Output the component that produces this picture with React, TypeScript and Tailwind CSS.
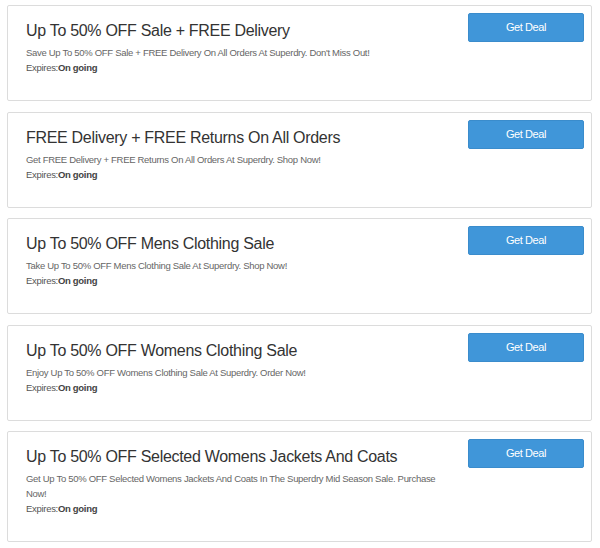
const deals = [
  {
    title: 'Up To 50% OFF Sale + FREE Delivery',
    desc: "Save Up To 50% OFF Sale + FREE Delivery On All Orders At Superdry. Don't Miss Out!",
  },
  {
    title: 'FREE Delivery + FREE Returns On All Orders',
    desc: 'Get FREE Delivery + FREE Returns On All Orders At Superdry. Shop Now!',
  },
  {
    title: 'Up To 50% OFF Mens Clothing Sale',
    desc: 'Take Up To 50% OFF Mens Clothing Sale At Superdry. Shop Now!',
  },
  {
    title: 'Up To 50% OFF Womens Clothing Sale',
    desc: 'Enjoy Up To 50% OFF Womens Clothing Sale At Superdry. Order Now!',
  },
  {
    title: 'Up To 50% OFF Selected Womens Jackets And Coats',
    desc: 'Get Up To 50% OFF Selected Womens Jackets And Coats In The Superdry Mid Season Sale. Purchase Now!',
  },
];

const DealCard = ({ title, desc }: { title: string; desc: string }) => (
  <div className="flex items-start justify-between bg-white border border-[#dcdcdc] rounded-[2px]">
    <div className="pt-[15px] pl-[18px] pb-[25px] w-[440px]">
      <h3 className="text-[16px] leading-[20px] tracking-[-0.3px] text-[#333] font-normal">{title}</h3>
      <p className="mt-[4px] text-[9.5px] leading-[15px] tracking-[-0.3px] text-[#666] w-[415px]">{desc}</p>
      <div className="text-[9.5px] leading-[15px] tracking-[-0.3px] text-[#555]">
        Expires:<span className="font-bold text-[#444]">On going</span>
      </div>
    </div>
    <button className="mt-[7px] mr-[7px] w-[116px] h-[29px] bg-[#4096d9] border border-[#3a8ccc] rounded-[2px] text-white text-[11px] tracking-[-0.4px]">
      Get Deal
    </button>
  </div>
);

export default function App() {
  return (
    <div
      className="w-[600px] min-h-[548px] bg-white pt-[5px] pl-[7px]"
      style={{ fontFamily: '"Liberation Sans", Arial, sans-serif' }}
    >
      <div className="w-[585px] flex flex-col gap-[10.5px]">
        {deals.map((d) => (
          <DealCard key={d.title} title={d.title} desc={d.desc} />
        ))}
      </div>
    </div>
  );
}
